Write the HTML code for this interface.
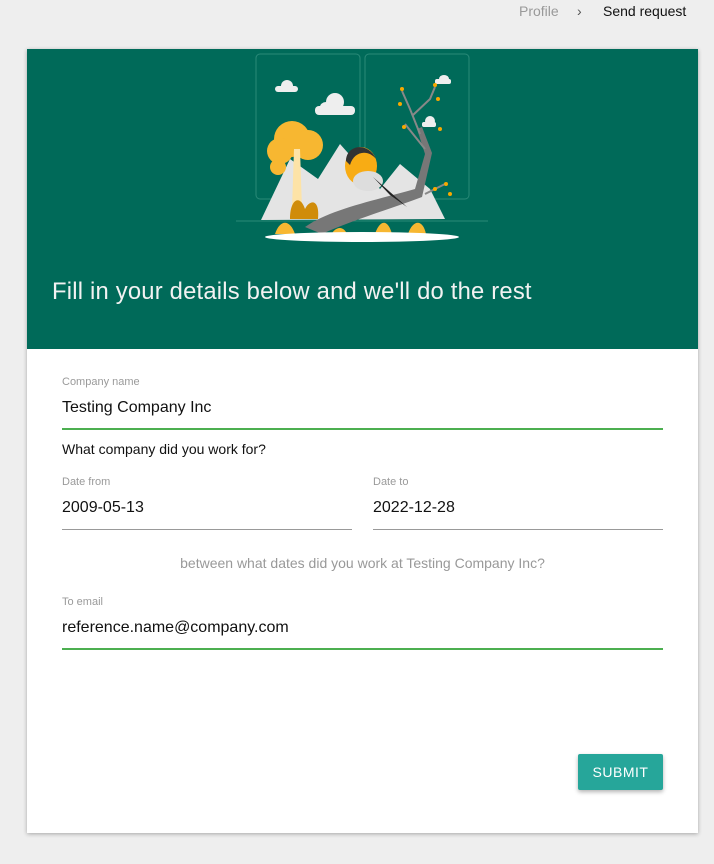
<!DOCTYPE html>
<html><head><meta charset="utf-8"><style>
body{margin:0;background:#eeeeee;font-family:"Liberation Sans","DejaVu Sans",sans-serif;width:714px;height:864px;overflow:hidden;position:relative}
.bc{position:absolute;top:3px;font-size:14px}
.card{position:absolute;left:27px;top:49px;width:671px;height:784px;background:#fff;box-shadow:0 1px 4px rgba(0,0,0,.3)}
.hdr{position:absolute;left:0;top:0;width:671px;height:300px;background:#006a59}
.hdr h1{position:absolute;left:25px;top:229px;margin:0;font-weight:300;font-size:23.8px;color:#f2f2f2;letter-spacing:.2px}
.lbl{position:absolute;font-size:11px;color:#9a9a9a}
.val{position:absolute;font-size:16px;color:#111}
.line{position:absolute;height:1px;background:#999}
.gl{position:absolute;height:2px;background:#4caf50}
.btn{position:absolute;left:551px;top:705px;width:85px;height:36px;background:#26a69a;color:#fff;font-size:14px;text-align:center;line-height:36px;box-shadow:0 2px 4px rgba(0,0,0,.3);border-radius:2px;letter-spacing:.5px}
</style></head><body>
<div class="bc" style="left:519px;color:#999">Profile</div>
<div class="bc" style="left:577px;color:#555">&#8250;</div>
<div class="bc" style="left:603px;color:#111">Send request</div>
<div class="card">
<div class="hdr">
<svg style="position:absolute;left:203px;top:0" width="270" height="200" viewBox="0 0 270 200">
<rect x="26" y="5" width="104" height="145" rx="4" fill="none" stroke="#2a8a78" stroke-width="1"/>
<rect x="135" y="5" width="104" height="145" rx="4" fill="none" stroke="#2a8a78" stroke-width="1"/>
<line x1="6" y1="172" x2="258" y2="172" stroke="#2a8a78"/>
<g fill="#eee">
<ellipse cx="57" cy="37" rx="6" ry="6"/><rect x="45" y="37" width="23" height="6" rx="3"/>
<ellipse cx="105" cy="53" rx="9" ry="9"/><ellipse cx="96" cy="58" rx="6" ry="5"/><rect x="85" y="57" width="40" height="9" rx="4"/>
<ellipse cx="214" cy="30" rx="5" ry="4"/><rect x="205" y="30" width="16" height="5" rx="2"/>
<ellipse cx="200" cy="72" rx="5" ry="5"/><rect x="192" y="73" width="14" height="5" rx="2"/>
</g>
<polygon points="31,171 60,110 88,130 110,95 150,140 170,115 200,140 215,170" fill="#e4e4e4"/>
<circle cx="62" cy="90" r="18" fill="#f7b731"/><circle cx="78" cy="96" r="15" fill="#f7b731"/><circle cx="50" cy="102" r="13" fill="#f7b731"/><circle cx="48" cy="118" r="8" fill="#f7b731"/>
<path d="M64 100 L70 100 L72 160 L62 160z" fill="#fde3a7"/>
<path d="M75 178 C100 160 150 150 185 140 L195 105 L187 80 L192 78 L202 104 L192 148 C160 160 120 172 92 185z" fill="#777"/>
<g stroke="#888" stroke-width="2" fill="none"><path d="M190 85 L180 60 L172 42 M183 66 L200 50 L205 38 M195 100 L175 75 M195 145 L215 135"/></g>
<g fill="#f7a800"><circle cx="172" cy="40" r="2"/><circle cx="205" cy="36" r="2"/><circle cx="208" cy="50" r="2"/><circle cx="170" cy="55" r="2"/><circle cx="174" cy="78" r="2"/><circle cx="210" cy="80" r="2"/><circle cx="216" cy="135" r="2"/><circle cx="220" cy="145" r="2"/><circle cx="205" cy="140" r="2"/></g>
<ellipse cx="131" cy="117" rx="16" ry="19" fill="#f8ac14"/><ellipse cx="138" cy="132" rx="15" ry="10" fill="#ddd"/>
<path d="M143 128 L177 158 L160 146z" fill="#222"/><path d="M116 112 C116 96 138 92 146 110 C138 100 124 102 120 116z" fill="#333"/>
<path d="M60 170 C60 150 70 145 75 160 C80 150 90 150 88 170z" fill="#d08c0a"/>
<path d="M45 185 C50 170 60 170 65 185z M100 188 C105 176 115 176 118 188z M145 185 C150 170 158 170 162 185z M178 185 C183 170 193 170 196 185z" fill="#f7b731"/>
<ellipse cx="132" cy="188" rx="97" ry="5" fill="#fff"/>
</svg>
<h1>Fill in your details below and we'll do the rest</h1>
</div>
<div class="lbl" style="left:35px;top:327px">Company name</div>
<div class="val" style="left:35px;top:350px">Testing Company Inc</div>
<div class="gl" style="left:35px;top:379px;width:601px"></div>
<div class="val" style="left:35px;top:392px;font-size:14px">What company did you work for?</div>
<div class="lbl" style="left:35px;top:427px">Date from</div>
<div class="val" style="left:35px;top:450px">2009-05-13</div>
<div class="line" style="left:35px;top:480px;width:290px"></div>
<div class="lbl" style="left:346px;top:427px">Date to</div>
<div class="val" style="left:346px;top:450px">2022-12-28</div>
<div class="line" style="left:346px;top:480px;width:290px"></div>
<div class="val" style="left:0;width:671px;text-align:center;top:506px;font-size:14px;color:#999">between what dates did you work at Testing Company Inc?</div>
<div class="lbl" style="left:35px;top:547px">To email</div>
<div class="val" style="left:35px;top:570px">reference.name@company.com</div>
<div class="gl" style="left:35px;top:599px;width:601px"></div>
<div class="btn">SUBMIT</div>
</div>
</body></html>
